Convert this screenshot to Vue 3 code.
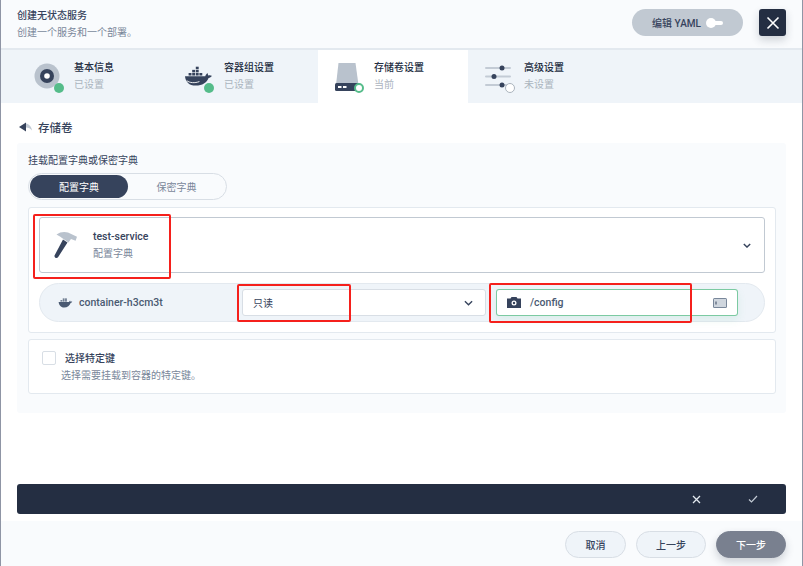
<template>
  <div class="page">
    <div class="modal">
      <!-- Header -->
      <header class="modal-header">
        <div class="header-text">
          <div class="header-title">创建无状态服务</div>
          <div class="header-desc">创建一个服务和一个部署。</div>
        </div>
        <button class="yaml-btn">
          编辑 YAML
          <span class="yaml-switch"><span class="yaml-knob"></span></span>
        </button>
        <button class="close-btn" aria-label="Close">
          <svg width="14" height="14" viewBox="0 0 14 14" fill="none" stroke="#fff" stroke-width="1.6">
            <path d="M1.5 1.5l11 11M12.5 1.5l-11 11" />
          </svg>
        </button>
      </header>

      <!-- Steps -->
      <div class="tabs">
        <div v-for="tab in tabs" :key="tab.name" class="tab" :class="{ current: tab.state === 'current' }">
          <span class="tab-icon">
            <svg v-if="tab.icon === 'disc'" width="30" height="30" viewBox="0 0 30 30">
              <circle cx="13" cy="13" r="12.5" fill="#b9c2cd" />
              <circle cx="13" cy="13" r="7" fill="#36435c" />
              <circle cx="13" cy="13" r="2.8" fill="#fff" />
            </svg>
            <svg v-else-if="tab.icon === 'docker'" width="29" height="27" viewBox="0 0 32 30">
              <g fill="#36435c">
                <path d="M1 13.5h22.5c.6-1.6 2-2.600 2.400-3.400.5 1 .8 2 .7 2.800 1.200-.6 2.700-.6 4.200.2-.7 1.500-2 2.400-3.600 2.500C25 21 20.500 24 13 24 5.500 24 1.500 19.500 1 13.500z" />
                <rect x="5" y="10" width="3.200" height="2.800" />
                <rect x="9" y="10" width="3.200" height="2.800" />
                <rect x="13" y="10" width="3.200" height="2.800" />
                <rect x="17" y="10" width="3.200" height="2.800" />
                <rect x="9" y="6.500" width="3.200" height="2.800" />
                <rect x="13" y="6.500" width="3.200" height="2.800" />
                <rect x="13" y="3" width="3.200" height="2.800" />
              </g>
              <path d="M3 18.500c3 2.500 9 3 14 1" stroke="#fff" stroke-width="1" fill="none" />
            </svg>
            <svg v-else-if="tab.icon === 'drive'" width="30" height="32" viewBox="0 0 30 32">
              <path d="M4.500 1h17l3 22H2z" fill="#b9c2cd" />
              <rect x="1" y="21" width="25" height="8" rx="1.500" fill="#36435c" />
              <rect x="4" y="24" width="3.500" height="2" fill="#fff" />
              <rect x="9" y="24" width="3.500" height="2" fill="#fff" />
            </svg>
            <svg v-else width="30" height="30" viewBox="0 0 30 30">
              <g stroke="#c3cbd5" stroke-width="2" stroke-linecap="round">
                <path d="M2 5h24M2 13.500h24M2 22h24" />
              </g>
              <g fill="#36435c">
                <circle cx="18" cy="5" r="2.500" />
                <circle cx="10" cy="13.500" r="2.500" />
                <circle cx="18" cy="22" r="2.500" />
              </g>
            </svg>
            <span class="tab-dot" :class="tab.state"></span>
          </span>
          <span class="tab-text">
            <span class="tab-name">{{ tab.name }}</span>
            <span class="tab-status">{{ tab.status }}</span>
          </span>
        </div>
      </div>

      <!-- Body -->
      <main class="body">
        <div class="back-title">
          <svg width="14" height="10" viewBox="0 0 14 10">
            <path d="M0 5l7-4.500v9z" fill="#36435c" />
            <path d="M7 1.500c3 .5 5.500 3 6 7-1.500-2-3.500-3-6-3z" fill="#c3cbd5" />
          </svg>
          存储卷
        </div>

        <section class="panel">
          <div class="panel-label">挂载配置字典或保密字典</div>
          <div class="toggle">
            <span class="toggle-item active">配置字典</span>
            <span class="toggle-item">保密字典</span>
          </div>

          <div class="card mount-card">
            <div class="select-box">
              <svg class="hammer" width="28" height="28" viewBox="0 0 28 28">
                <path d="M11 8.500l4.500 3-9.300 14.500c-.6 1-1.900 1.300-2.800.7-1-.6-1.200-1.900-.6-2.800z" fill="#36435c" />
                <path d="M4.500 3.500C8 .8 12.500.5 16 1.500l9 4.300-1.400 3.900-4.600-1.600-2.600 3.500-4.900-3.500C9.500 6.500 7.500 5 4.500 3.500z" fill="#b9c2cd" />
              </svg>
              <div class="select-text">
                <div class="select-name">test-service</div>
                <div class="select-type">配置字典</div>
              </div>
              <svg class="chevron" width="8" height="5" viewBox="0 0 10 6" fill="none" stroke="#36435c" stroke-width="1.700">
                <path d="M1 1l4 4 4-4" />
              </svg>
            </div>

            <div class="container-row">
              <div class="container-name">
                <svg width="15" height="11" viewBox="0 0 32 24">
                  <path fill="#4a5a72" d="M1 11h22.500c.6-1.600 2-2.600 2.400-3.400.5 1 .8 2 .7 2.800 1.200-.6 2.700-.6 4.200.2-.7 1.500-2 2.400-3.600 2.500C25 19 20.500 23 13 23 5.500 23 1.500 17 1 11zM5 7h4v3H5zm5 0h4v3h-4zm5 0h4v3h-4zM10 3h4v3h-4zm5 0h4v3h-4z" />
                </svg>
                container-h3cm3t
              </div>
              <div class="field mode-field">
                <span>只读</span>
                <svg width="9" height="6" viewBox="0 0 10 6" fill="none" stroke="#36435c" stroke-width="1.500">
                  <path d="M1 1l4 4 4-4" />
                </svg>
              </div>
              <div class="field path-field">
                <svg width="14" height="12" viewBox="0 0 14 12">
                  <path d="M0 1.500h3.500L4.500 0h5l1 1.500H14V11H0z" fill="#36435c" />
                  <circle cx="7" cy="6" r="2.500" fill="#fff" />
                  <circle cx="7" cy="6" r="1.200" fill="#36435c" />
                </svg>
                <span class="path-value">/config</span>
                <svg class="path-end" width="14" height="10" viewBox="0 0 14 10">
                  <rect width="14" height="10" rx="1.500" fill="#79879a" />
                  <rect x="1" y="1" width="12" height="8" fill="#cfd6de" />
                  <rect x="2.500" y="3.500" width="1" height="3" fill="#36435c" />
                </svg>
              </div>
            </div>
          </div>

          <div class="card key-card">
            <span class="checkbox"></span>
            <div>
              <div class="key-title">选择特定键</div>
              <div class="key-desc">选择需要挂载到容器的特定键。</div>
            </div>
          </div>
        </section>

        <div class="notice-bar">
          <svg width="9" height="9" viewBox="0 0 9 9" fill="none" stroke="#e3e9ef" stroke-width="1.300">
            <path d="M1 1l7 7M8 1L1 8" />
          </svg>
          <svg width="10" height="8" viewBox="0 0 10 8" fill="none" stroke="#c3cbd5" stroke-width="1.200">
            <path d="M1 4.500L3.500 7 9 1" />
          </svg>
        </div>
      </main>

      <!-- Footer -->
      <footer class="modal-footer">
        <button class="btn cancel">取消</button>
        <button class="btn prev">上一步</button>
        <button class="btn next">下一步</button>
      </footer>

      <!-- Annotation boxes drawn over the screenshot -->
      <span class="mark mark-select"></span>
      <span class="mark mark-mode"></span>
      <span class="mark mark-path"></span>
    </div>
  </div>
</template>

<script setup>
const tabs = [
  { name: '基本信息', status: '已设置', icon: 'disc', state: 'done' },
  { name: '容器组设置', status: '已设置', icon: 'docker', state: 'done' },
  { name: '存储卷设置', status: '当前', icon: 'drive', state: 'current' },
  { name: '高级设置', status: '未设置', icon: 'sliders', state: 'todo' }
]
</script>

<style>
html, body { margin: 0; background: #8f95a5; }
</style>

<style scoped>
.page {
  width: 803px;
  height: 566px;
  overflow: hidden;
  font-family: Roboto, "Noto Sans CJK SC", sans-serif;
  color: #36435c;
  background: #8f95a5;
}

.modal {
  position: relative;
  width: 801px;
  height: 566px;
  margin-left: 1px;
  background: #fff;
  display: flex;
  flex-direction: column;
}

/* ── Header ── */
.modal-header {
  height: 48px;
  flex-shrink: 0;
  display: flex;
  align-items: center;
  padding: 0 16px;
  background: #f9fbfd;
  border-bottom: 2px solid #e3e9ef;
}
.header-text { flex: 1; margin-top: -1px; }
.header-title { font-size: 10px; font-weight: 500; line-height: 13px; color: #36435c; }
.header-desc { font-size: 10px; line-height: 13px; margin-top: 4px; color: #79879a; }

.yaml-btn {
  width: 111px;
  height: 27px;
  margin-right: 16px;
  margin-top: -3px;
  border: none;
  border-radius: 14px;
  background: #c1c9d2;
  color: #36435c;
  font: 500 10px Roboto, "Noto Sans CJK SC", sans-serif;
  display: flex;
  align-items: center;
  justify-content: center;
  gap: 5px;
  padding: 0;
}
.yaml-switch {
  position: relative;
  width: 16px;
  height: 4px;
  margin-left: 1px;
  border-radius: 2px;
  background: #fff;
}
.yaml-knob {
  position: absolute;
  left: -1px;
  top: -3px;
  width: 10px;
  height: 10px;
  border-radius: 50%;
  background: #fff;
}
.close-btn {
  width: 27px;
  height: 27px;
  margin-top: -3px;
  border: none;
  border-radius: 3px;
  background: #242e42;
  display: flex;
  align-items: center;
  justify-content: center;
  padding: 0;
  box-shadow: 0 4px 8px rgba(36, 46, 66, 0.2);
}

/* ── Tabs ── */
.tabs {
  height: 53px;
  flex-shrink: 0;
  display: flex;
  padding-left: 17px;
  background: #eff4f9;
}
.tab {
  width: 150px;
  display: flex;
  align-items: center;
  padding: 0 0 2px 16px;
  box-sizing: border-box;
}
.tab.current { background: #fff; }
.tab-icon {
  position: relative;
  width: 40px;
  height: 32px;
  flex-shrink: 0;
  display: flex;
  align-items: center;
}
.tab-icon svg { margin-top: 4px; }
.tab-dot {
  position: absolute;
  left: 20px;
  top: 23px;
  width: 10px;
  height: 10px;
  border-radius: 50%;
  box-sizing: border-box;
}
.tab-dot.done { background: #55bc8a; }
.tab-dot.current { background: #fff; border: 2px solid #55bc8a; left: 20px; }
.tab-dot.todo { background: #fff; border: 1px solid #abb4be; left: 21px; }
.tab-text { display: flex; flex-direction: column; }
.tab-name { font-size: 10px; font-weight: 500; line-height: 13px; color: #242e42; }
.tab-status { font-size: 10px; line-height: 13px; margin-top: 4px; color: #abb4be; }

/* ── Body ── */
.body {
  flex: 1;
  display: flex;
  flex-direction: column;
  padding: 0 16px;
  min-height: 0;
}
.back-title {
  height: 40px;
  flex-shrink: 0;
  display: flex;
  align-items: center;
  gap: 5px;
  padding: 7px 0 0 2px;
  box-sizing: border-box;
  font-size: 11.500px;
  font-weight: 500;
  color: #36435c;
}
.panel {
  height: 270px;
  box-sizing: border-box;
  padding: 11px 10px 0 11px;
  background: #f9fbfd;
  border-radius: 3px;
}
.panel-label { font-size: 10px; line-height: 13px; color: #36435c; }
.toggle {
  width: 199px;
  height: 27px;
  margin-top: 6px;
  box-sizing: border-box;
  padding: 1px;
  display: flex;
  border: 1px solid #d8dee5;
  border-radius: 14px;
  background: #f9fbfd;
}
.toggle-item {
  flex: 1;
  display: flex;
  align-items: center;
  justify-content: center;
  font-size: 10px;
  color: #79879a;
  border-radius: 12px;
}
.toggle-item.active { flex: 0 0 98px; background: #36435c; color: #fff; }

.card {
  background: #fff;
  border: 1px solid #e3e9ef;
  border-radius: 3px;
  box-sizing: border-box;
}
.mount-card {
  height: 126px;
  margin-top: 7px;
  padding: 9px 10px;
  display: flex;
  flex-direction: column;
  gap: 10px;
}
.select-box {
  height: 56px;
  flex-shrink: 0;
  box-sizing: border-box;
  display: flex;
  align-items: center;
  padding: 0 13px 0 12px;
  border: 1px solid #c1c9d2;
  border-radius: 3px;
}
.hammer { flex-shrink: 0; }
.select-text { flex: 1; margin-left: 13px; }
.select-name { font-size: 10.500px; font-weight: 500; line-height: 13px; color: #36435c; }
.select-type { font-size: 10px; line-height: 13px; margin-top: 4px; color: #79879a; }

.container-row {
  height: 39px;
  flex-shrink: 0;
  box-sizing: border-box;
  display: flex;
  align-items: center;
  padding-left: 18px;
  background: #eff4f9;
  border: 1px solid #e3e9ef;
  border-radius: 20px;
}
.container-name {
  width: 184px;
  flex-shrink: 0;
  display: flex;
  align-items: center;
  gap: 6px;
  font-size: 10.500px;
  font-weight: 500;
  color: #4a5a72;
}
.field {
  height: 27px;
  box-sizing: border-box;
  display: flex;
  align-items: center;
  background: #fff;
  border-radius: 3px;
  font-size: 10px;
}
.mode-field {
  width: 244px;
  flex-shrink: 0;
  justify-content: space-between;
  padding: 0 12px 0 10px;
  border: 1px solid #d8dee5;
}
.path-field {
  width: 242px;
  flex-shrink: 0;
  margin-left: 10px;
  padding: 0 11px;
  box-shadow: inset 0 0 0 1px #7ccaa2, 0 4px 8px rgba(85, 188, 138, 0.12);
}
.path-value { flex: 1; margin-left: 9px; font-size: 10.500px; font-weight: 500; color: #4a5a72; }
.path-end { flex-shrink: 0; }

.key-card {
  height: 55px;
  margin-top: 6px;
  padding: 11px 13px;
  display: flex;
  gap: 9px;
}
.checkbox {
  width: 12px;
  height: 12px;
  flex-shrink: 0;
  border: 1px solid #d8dee5;
  border-radius: 2px;
  background: #fff;
}
.key-title { font-size: 10px; font-weight: 500; line-height: 13px; margin-top: 1px; color: #36435c; }
.key-desc { font-size: 10px; line-height: 13px; margin-top: 4px; margin-left: -4px; color: #79879a; }

.notice-bar {
  height: 30px;
  flex-shrink: 0;
  margin-top: 71px;
  display: flex;
  align-items: center;
  justify-content: flex-end;
  gap: 47px;
  padding-right: 28px;
  background: #242e42;
  border-radius: 3px;
}

/* ── Footer ── */
.modal-footer {
  height: 45px;
  flex-shrink: 0;
  box-sizing: border-box;
  display: flex;
  justify-content: flex-end;
  gap: 10px;
  padding: 10px 16px 0 0;
  background: #f9fbfd;
}
.btn {
  width: 70px;
  height: 27px;
  padding: 0;
  border: 1px solid #d8dee5;
  border-radius: 14px;
  background: #eff4f9;
  color: #36435c;
  font: 500 10px Roboto, "Noto Sans CJK SC", sans-serif;
}
.btn.cancel { width: 61px; }
.btn.next {
  border-color: #79808f;
  background: #79808f;
  color: #fff;
  box-shadow: 0 4px 8px rgba(36, 46, 66, 0.2);
}

/* ── Red annotation boxes ── */
.mark {
  position: absolute;
  box-sizing: border-box;
  border: 2px solid #f5201c;
  border-radius: 2px;
}
.mark-select { left: 32px; top: 214px; width: 138px; height: 65px; }
.mark-mode { left: 236px; top: 284px; width: 114px; height: 38px; }
.mark-path { left: 488px; top: 283px; width: 203px; height: 40px; }
</style>
